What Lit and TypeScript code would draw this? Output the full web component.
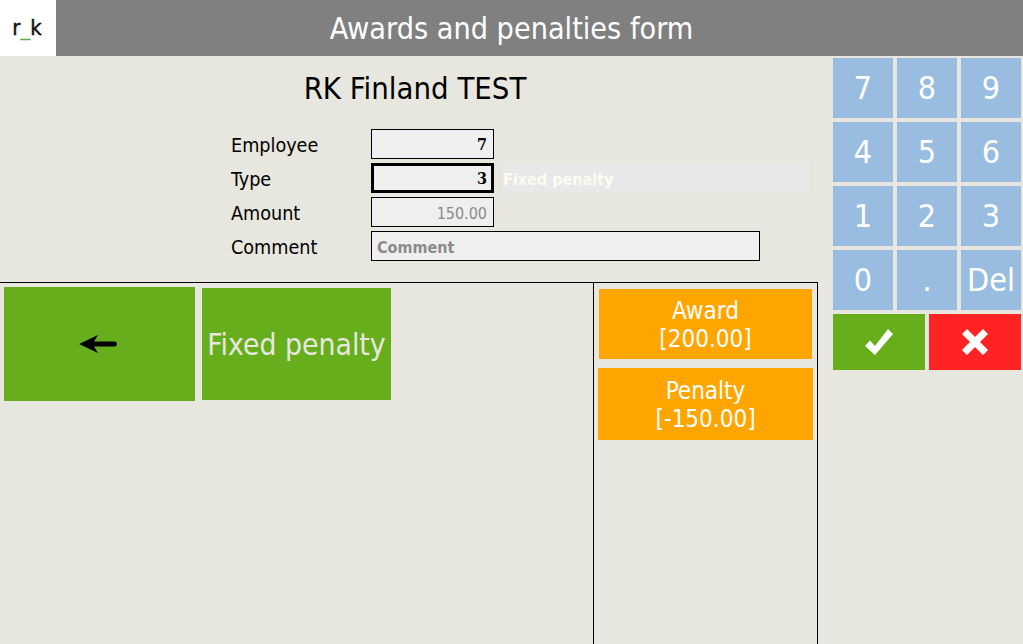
import { LitElement, html, css } from "lit";
import { customElement } from "lit/decorators.js";

@customElement("app-root")
export class AppRoot extends LitElement {
  static styles = css`
    :host { display: block; width: 1023px; height: 644px; overflow: hidden; background: #e7e7df; color: #000;
      font-family: "DejaVu Sans Condensed", "DejaVu Sans", sans-serif; }
    * { box-sizing: border-box; }
    .header { display: flex; height: 56px; background: #808080; }
    .logo { width: 56px; background: #fff; display: flex; align-items: center; justify-content: center;
      font-size: 22px; color: #111; padding: 0 2px 2px 0; -webkit-text-stroke: 0.4px #111; }
    .logo span { color: #5cb04a; -webkit-text-stroke: 0; }
    .title { flex: 1; text-align: center; color: #fff; font-size: 30.25px; line-height: 58px; padding-right: 56px; }
    .body { display: flex; height: 588px; }
    .left { width: 833px; display: flex; flex-direction: column; }
    .company { height: 73px; width: 830px; text-align: center; font-size: 30.8px; line-height: 65px; }
    .form { height: 153px; padding-left: 231px; display: flex; flex-direction: column; gap: 4px; }
    .row { display: flex; height: 30px; align-items: center; }
    .label { width: 140px; font-size: 19.6px; line-height: 34px; height: 30px; }
    .field { width: 123px; height: 30px; background: #efefef; border: 1px solid #000; text-align: right;
      padding-right: 6px; font-size: 16px; line-height: 30px; font-weight: bold; font-family: "DejaVu Serif Condensed", "DejaVu Serif", serif; }
    .field.focus { border-width: 3px; line-height: 26px; padding-right: 4px; }
    .field.amount { font-weight: normal; color: #8a8a8a; font-family: "DejaVu Sans Condensed", sans-serif; line-height: 31px; }
    .field.comment { width: 389px; text-align: left; padding: 0 0 0 5px; color: #8a8a8a; line-height: 31px;
      font-family: "DejaVu Sans Condensed", sans-serif; }
    .desc { width: 307px; height: 30px; margin-left: 9px; background: #e8e8e8; color: #fcfcf0; font-weight: bold;
      font-size: 16px; line-height: 33px; }
    .lower { flex: 1; width: 818px; display: flex; border-top: 1px solid #000; border-right: 1px solid #000; }
    .actions { width: 594px; border-right: 1px solid #000; display: flex; align-items: flex-start; padding: 4px 0 0 4px; gap: 7px; }
    .btn { background: #67ae1c; display: flex; align-items: center; justify-content: center; }
    .back { width: 191px; height: 114px; }
    .back svg { margin-left: -3px; }
    .fixed { width: 189px; height: 112px; margin-top: 1px; color: #e7e7df; font-size: 29.8px; white-space: nowrap; }
    .types { flex: 1; display: flex; flex-direction: column; align-items: center; padding-top: 6px; }
    .type { background: #ffa500; color: #fff; font-size: 24px; line-height: 28px; text-align: center;
      display: flex; align-items: center; justify-content: center; padding-top: 2px; }
    .award { width: 213px; height: 70px; }
    .penalty { width: 215px; height: 72px; margin-top: 9px; }
    .pad { display: grid; grid-template-columns: repeat(3, 60px); grid-auto-rows: 60px; gap: 4px; padding-top: 2px; align-content: start; }
    .key { background: #99bde0; color: #fff; font-size: 32px; display: flex; align-items: center; justify-content: center; }
    .pad-actions { grid-column: 1 / -1; display: flex; gap: 4px; height: 56px; }
    .ok, .no { width: 92px; height: 56px; display: flex; align-items: center; justify-content: center; }
    .ok { background: #67ae1c; }
    .no { background: #ff2323; }
  `;

  render() {
    return html`
      <div class="header">
        <div class="logo">r<span>_</span>k</div>
        <div class="title">Awards and penalties form</div>
      </div>
      <div class="body">
        <div class="left">
          <div class="company">RK Finland TEST</div>
          <div class="form">
            <div class="row"><div class="label">Employee</div><div class="field">7</div></div>
            <div class="row"><div class="label">Type</div><div class="field focus">3</div><div class="desc">Fixed penalty</div></div>
            <div class="row"><div class="label">Amount</div><div class="field amount">150.00</div></div>
            <div class="row"><div class="label">Comment</div><div class="field comment">Comment</div></div>
          </div>
          <div class="lower">
            <div class="actions">
              <div class="btn back">
                <svg width="38" height="20" viewBox="0 0 38 20">
                  <path d="M0 10 L19 1 L15 7.5 H35.5 a2.5 2.5 0 0 1 0 5 H15 L19 19 Z" fill="#000" />
                </svg>
              </div>
              <div class="btn fixed">Fixed penalty</div>
            </div>
            <div class="types">
              <div class="type award"><div>Award<br />[200.00]</div></div>
              <div class="type penalty"><div>Penalty<br />[-150.00]</div></div>
            </div>
          </div>
        </div>
        <div class="pad">
          ${["7", "8", "9", "4", "5", "6", "1", "2", "3", "0", ".", "Del"].map((k) => html`<div class="key">${k}</div>`)}
          <div class="pad-actions">
            <div class="ok">
              <svg width="28" height="26" viewBox="0 0 28 26"><path d="M0 17 L5 11.5 L10 17 L23 0 L28 5 L10 26 Z" fill="#fff" /></svg>
            </div>
            <div class="no">
              <svg width="26" height="26" viewBox="0 0 26 26"><path d="M5 0 L13 8 L21 0 L26 5 L18 13 L26 21 L21 26 L13 18 L5 26 L0 21 L8 13 L0 5 Z" fill="#fff" /></svg>
            </div>
          </div>
        </div>
      </div>
    `;
  }
}
